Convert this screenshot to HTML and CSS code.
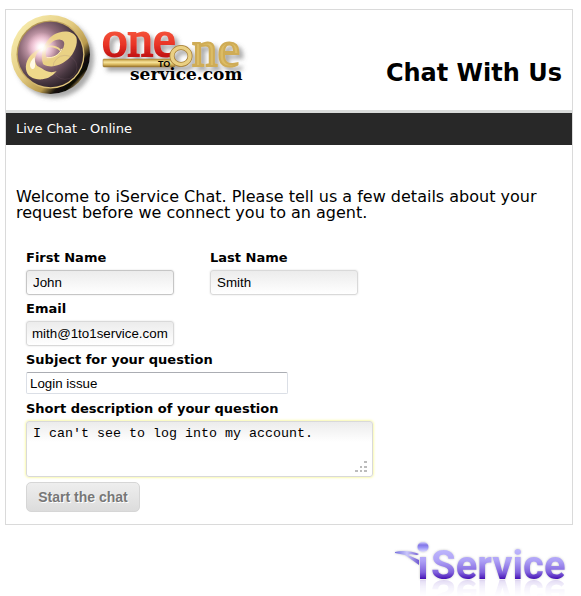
FILE: index.html
```html
<!DOCTYPE html>
<html lang="en">
<head>
<meta charset="utf-8">
<title>Chat With Us</title>
<link rel="stylesheet" href="styles.css">
</head>
<body>
<main class="card">
  <header class="masthead">
    <svg class="logo" viewBox="0 0 250 96" role="img" aria-label="One to One service.com">
      <defs>
        <linearGradient id="rim" x1="0.1" y1="0.1" x2="0.9" y2="0.85">
          <stop offset="0" stop-color="#f8edae"/><stop offset="0.45" stop-color="#e3cb80"/>
          <stop offset="0.72" stop-color="#b8994c"/><stop offset="0.84" stop-color="#17120b"/><stop offset="0.93" stop-color="#0b0805"/><stop offset="1" stop-color="#d5b767"/>
        </linearGradient>
        <linearGradient id="bevel" x1="0.1" y1="0.1" x2="0.9" y2="0.9">
          <stop offset="0" stop-color="#a98d4d"/><stop offset="0.5" stop-color="#cdb069"/><stop offset="1" stop-color="#e8cd80"/>
        </linearGradient>
        <radialGradient id="disc" cx="0.35" cy="0.38" r="0.65">
          <stop offset="0" stop-color="#fff"/><stop offset="0.15" stop-color="#eebfd0"/>
          <stop offset="0.5" stop-color="#8b6876"/><stop offset="0.85" stop-color="#46363f"/><stop offset="1" stop-color="#30242b"/>
        </radialGradient>
        <radialGradient id="glow">
          <stop offset="0" stop-color="#fff"/><stop offset="0.2" stop-color="#fff" stop-opacity="0.85"/><stop offset="1" stop-color="#ffc5dd" stop-opacity="0"/>
        </radialGradient>
        <linearGradient id="red" x1="0" y1="0" x2="0" y2="1">
          <stop offset="0.35" stop-color="#f4553b"/><stop offset="0.6" stop-color="#e93426"/><stop offset="0.8" stop-color="#c41514"/>
        </linearGradient>
        <linearGradient id="gold" x1="0" y1="0" x2="0" y2="1">
          <stop offset="0" stop-color="#b99136"/><stop offset="0.4" stop-color="#f7e49c"/><stop offset="0.65" stop-color="#dfbf65"/><stop offset="1" stop-color="#96712a"/>
        </linearGradient>
        <filter id="drop" x="-20%" y="-20%" width="150%" height="160%">
          <feDropShadow dx="4" dy="4" stdDeviation="2" flood-color="#555" flood-opacity="0.5"/>
        </filter>
      </defs>
      <g transform="translate(-6 -10)">
        <circle cx="50.5" cy="54.5" r="39.5" fill="url(#rim)" filter="url(#drop)"/>
        <circle cx="50.5" cy="54.5" r="34" fill="url(#bevel)"/>
        <circle cx="50.5" cy="54.5" r="32.7" fill="url(#disc)"/>
        <g transform="scale(0.333333)">
          <path d="M183 149C166 131 138 135 116 148C91 161 75 184 78 208C81 230 102 240 127 238C147 236 160 225 170 214C151 220 137 214 125 205L112 198C102 188 102 166 118 153C141 138 164 139 180 153Z" fill="#efd98b"/>
          <path d="M129 192C119 164 130 126 160 105C185 89 219 91 229 112C235 130 223 162 204 178C181 198 152 205 132 194ZM142 172C160 174 181 162 190 143C196 129 192 120 181 119C163 117 145 132 139 151C136 163 137 171 142 172Z" fill="#e9d184" fill-rule="evenodd"/>
          <path d="M186 146C178 166 158 176 140 172" fill="none" stroke="#fff3bd" stroke-width="3"/>
          <path d="M104 172C90 182 85 200 96 207C108 210 106 193 104 172Z" fill="#fff9e5"/>
          <circle cx="195" cy="202" r="36" fill="none" stroke="#8b6b77" stroke-opacity="0.3" stroke-width="2"/>
          <circle cx="126" cy="143" r="46" fill="url(#glow)"/>
        </g>
        <g filter="url(#drop)">
          <rect x="103" y="59" width="72" height="8" rx="1" fill="url(#gold)" stroke="#9a793a" stroke-width="0.5"/>
          <text class="logo-one" x="102" y="56" fill="url(#red)" stroke="url(#red)">one</text>
          <text class="logo-one" x="192" y="66" fill="#dcbc65" stroke="#cfac56">ne</text>
          <ellipse cx="181" cy="56" rx="9" ry="8.5" fill="none" stroke="#a57f35" stroke-width="5"/>
          <ellipse cx="181" cy="56" rx="9" ry="8.5" fill="none" stroke="#ead083" stroke-width="3.5"/>
        </g>
        <text class="logo-to" x="158" y="67">TO</text>
        <text class="logo-service" x="130" y="80">service.com</text>
      </g>
    </svg>
    <h1 class="title">Chat With Us</h1>
  </header>
  <div class="status">Live Chat - Online</div>
  <section class="content">
    <p class="welcome">Welcome to iService Chat. Please tell us a few details about your request before we connect you to an agent.</p>
    <form class="form">
      <div class="names">
        <div class="field">
          <label for="first">First Name</label>
          <input class="soft strong" id="first" type="text" value="John">
        </div>
        <div class="field">
          <label for="last">Last Name</label>
          <input class="soft" id="last" type="text" value="Smith">
        </div>
      </div>
      <div class="field">
        <label for="email">Email</label>
        <input class="soft email" id="email" type="text" value="mith@1to1service.com">
      </div>
      <div class="field">
        <label for="subject">Subject for your question</label>
        <input class="plain" id="subject" type="text" value="Login issue">
      </div>
      <div class="field">
        <label for="description">Short description of your question</label>
        <div class="area">
          <textarea class="description" id="description">I can't see to log into my account.</textarea>
          <svg class="grip" viewBox="0 0 12 12" aria-hidden="true"><path d="M9 0h3v2H9zM5 5h2v2H5zM9 5h3v2H9zM0 9h3v2H0zM5 9h2v2H5zM9 9h3v2H9z"/></svg>
        </div>
      </div>
      <button class="start" type="button">Start the chat</button>
    </form>
  </section>
</main>
<footer class="footer">
  <svg class="brand" viewBox="0 0 176 56" role="img" aria-label="iService">
    <defs>
      <linearGradient id="violet" gradientUnits="userSpaceOnUse" x1="0" y1="6" x2="0" y2="39">
        <stop offset="0" stop-color="#c3beff"/><stop offset="0.45" stop-color="#aea1f6"/><stop offset="0.8" stop-color="#8163dd"/><stop offset="1" stop-color="#4612b4"/>
      </linearGradient>
      <linearGradient id="wing" x1="0" y1="0" x2="1" y2="0">
        <stop offset="0" stop-color="#7771df"/><stop offset="0.5" stop-color="#c9c6fb"/><stop offset="1" stop-color="#6f58d2"/>
      </linearGradient>
      <linearGradient id="ball" x1="0" y1="0" x2="0" y2="1">
        <stop offset="0" stop-color="#d3d0ff"/><stop offset="0.3" stop-color="#8275e7"/><stop offset="0.55" stop-color="#9a94f5"/><stop offset="1" stop-color="#dedcff"/>
      </linearGradient>
      <linearGradient id="fade" gradientUnits="userSpaceOnUse" x1="0" y1="39" x2="0" y2="22">
        <stop offset="0" stop-color="#fff" stop-opacity="0.16"/><stop offset="1" stop-color="#fff" stop-opacity="0"/>
      </linearGradient>
      <mask id="mirror-mask"><rect y="20" width="176" height="22" fill="url(#fade)"/></mask>
      <filter id="halo"><feDropShadow dx="0" dy="0" stdDeviation="1" flood-color="#888" flood-opacity="0.5"/></filter>
    </defs>
    <g filter="url(#halo)">
      <g id="word" fill="url(#violet)">
        <path d="M26 17h6v22h-6z"/>
        <text class="brand-text" x="37" y="39">Service</text>
      </g>
      <ellipse cx="29" cy="7" rx="5.500" ry="5" fill="url(#ball)"/>
      <path d="M1 12C8 10 18 11 25 14L23 15C17 14 15 14 14 15L25 20V25L11 15C8 14 4 14 1 13Z" fill="url(#wing)"/>
    </g>
    <g transform="matrix(1 0 0 -1 0 79)"><use href="#word" mask="url(#mirror-mask)"/></g>
  </svg>
</footer>
</body>
</html>
```

FILE: styles.css
```css
* { box-sizing: border-box; }

body {
  margin: 9px 8px 0 5px;
  background: #fff;
  color: #000;
  font-family: Verdana, "DejaVu Sans", sans-serif;
}

.card { border: 1px solid #dadada; }

.masthead {
  display: flex;
  justify-content: space-between;
  align-items: flex-start;
  height: 103px;
  border-bottom: 3px solid #d9dbda;
}

.logo { width: 250px; height: 96px; overflow: visible; }
.logo-one { font: 51px "Liberation Serif", serif; stroke-width: 2px; }
.logo-to { font: bold 9px "Liberation Sans Narrow", "Liberation Sans", sans-serif; }
.logo-service { font: bold 17px "DejaVu Serif", serif; }

.title {
  margin: 49px 10px 0 0;
  font-size: 24px;
  line-height: 28px;
  white-space: nowrap;
}

.status {
  padding: 0 10px;
  background: #282828;
  color: #fff;
  font-size: 13px;
  line-height: 32px;
}

.content { padding: 44px 20px 12px 10px; }

.welcome {
  margin: 0 0 26px;
  font-size: 16px;
  line-height: 16px;
}

.form {
  display: flex;
  flex-direction: column;
  align-items: flex-start;
  padding-left: 10px;
}

.names { display: flex; gap: 36px; }

.field { display: flex; flex-direction: column; }

.field label {
  font-size: 13px;
  font-weight: bold;
  line-height: 18px;
  padding: 2px 0 3px;
}

.soft,
.plain { font-family: "Liberation Sans", Arial, sans-serif; }

.soft {
  width: 148px;
  height: 25px;
  padding: 0 6px;
  border: 1px solid #d9d9d9;
  border-radius: 3px;
  background: linear-gradient(#ececec, #fff);
  box-shadow: 0 0 2px #ddd;
}

.strong { border-color: #c6c6c6; }
.email { padding: 0 5px; }
.field .soft { margin-bottom: 3px; }

.plain {
  width: 262px;
  height: 22px;
  padding: 0 3px;
  border: 1px solid #dbdfe6;
  border-top-color: #abadb3;
  border-radius: 2px;
  margin-bottom: 4px;
}

.area { position: relative; }

.description {
  display: block;
  width: 347px;
  height: 56px;
  padding: 4px 6px;
  border: 1px solid #d9d9d9;
  border-radius: 3px;
  background: linear-gradient(#ececec, #fff 20px);
  box-shadow: 0 0 3px #f3f35e;
  font-family: "Liberation Mono", "Courier New", monospace;
  resize: none;
}

.grip {
  position: absolute;
  right: 6px;
  bottom: 4px;
  width: 12px;
  height: 12px;
  fill: #bcbcbc;
}

.start {
  width: 114px;
  height: 30px;
  margin-top: 5px;
  padding: 0;
  border: 1px solid #d6d6d6;
  border-radius: 5px;
  background: linear-gradient(#eee, #dcdcdc);
  color: #777;
  font: bold 14px "Liberation Sans", Arial, sans-serif;
  text-shadow: 1px 1px 0 #fff;
}

.footer {
  display: flex;
  justify-content: flex-end;
  padding: 15px 3px 0 0;
}

.brand { width: 176px; height: 56px; overflow: visible; }
.brand-text { font: bold 40px Roboto, sans-serif; }
```
